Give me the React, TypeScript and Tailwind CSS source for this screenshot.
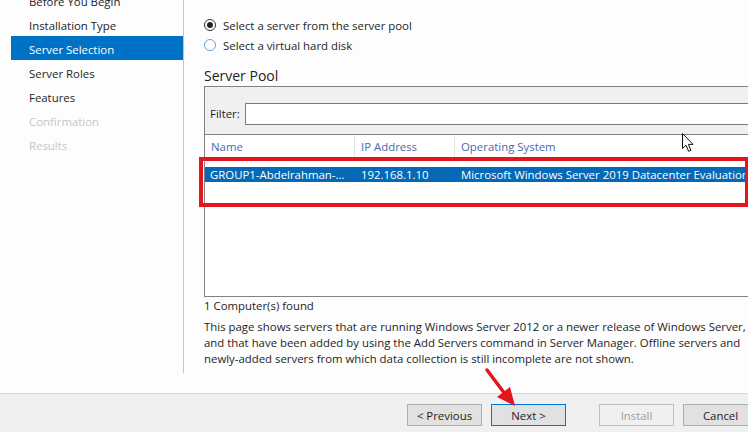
const font = { fontFamily: '"Open Sans", "Liberation Sans", sans-serif' };

const steps = [
  { label: 'Before You Begin', state: 'done' },
  { label: 'Installation Type', state: 'done' },
  { label: 'Server Selection', state: 'active' },
  { label: 'Server Roles', state: 'done' },
  { label: 'Features', state: 'done' },
  { label: 'Confirmation', state: 'off' },
  { label: 'Results', state: 'off' },
];

function Radio({ checked, label }: { checked?: boolean; label: string }) {
  return (
    <div className="flex items-center h-5 gap-[7px]">
      <span
        className={
          'w-[12px] h-[12px] rounded-full border flex items-center justify-center bg-white ' +
          (checked ? 'border-[#333333]' : 'border-[#6e9fd8]')
        }
      >
        {checked && <span className="w-[6px] h-[6px] rounded-full bg-[#222222]" />}
      </span>
      <span className="text-[#1e1e1e] pt-px">{label}</span>
    </div>
  );
}

function Button({ children, variant }: { children: React.ReactNode; variant?: 'default' | 'off' }) {
  let cls = 'bg-[#e1e1e1] border-[#adadad] text-[#1e1e1e]';
  if (variant === 'default') cls = 'bg-[#e1e1e1] border-[#0078d7] text-[#1e1e1e]';
  if (variant === 'off') cls = 'bg-[#f0f0f0] border-[#bfbfbf] text-[#a0a0a0]';
  return (
    <div className={'w-[75px] h-[22px] border flex items-center justify-center shrink-0 pt-px ' + cls}>
      {children}
    </div>
  );
}

export default function App() {
  return (
    <div
      className="relative w-[748px] h-[432px] overflow-hidden bg-[#fdfdfd] text-[11.4px] flex flex-col"
      style={font}
    >
      <div className="flex h-[393px] shrink-0">
        {/* wizard steps */}
        <div className="w-[184px] h-[373px] border-r border-[#c4c4c4] shrink-0 overflow-hidden">
          <div className="-mt-3 pl-[11px]">
            {steps.map((s) => (
              <div
                key={s.label}
                className={
                  'h-6 pl-[18px] pt-[3px] flex items-center ' +
                  (s.state === 'active'
                    ? 'bg-[#0072c6] text-white'
                    : s.state === 'off'
                    ? 'text-[#c6c6c6]'
                    : 'text-[#1e1e1e]')
                }
              >
                {s.label}
              </div>
            ))}
          </div>
        </div>

        {/* page content */}
        <div className="pl-[20px] pt-[15px] w-[600px] shrink-0">
          <Radio checked label="Select a server from the server pool" />
          <Radio label="Select a virtual hard disk" />

          <div className="mt-[11px] text-[14px] leading-5 text-[#1e1e1e]">Server Pool</div>

          <div className="border border-[#828282] h-[211px] w-[580px] bg-white">
            <div className="bg-[#f0f0f0] h-[48px] border-b border-[#828282] flex items-center pl-[5px] pt-[6px] gap-[5px]">
              <span className="text-[#1e1e1e] pt-px">Filter:</span>
              <div className="h-[22px] flex-1 bg-white border border-[#7a7a7a]" />
            </div>
            <div className="flex h-[23px] text-[#4a68ad]">
              <div className="w-[150px] border-r border-[#e3e3e3] pl-[6px] pt-px flex items-center">Name</div>
              <div className="w-[100px] border-r border-[#e3e3e3] pl-[6px] pt-px flex items-center">IP Address</div>
              <div className="flex-1 pl-[6px] pt-px flex items-center">Operating System</div>
            </div>
            <div className="pt-[9px]">
              <div className="flex h-[15px] bg-[#0569b5] text-white items-center">
                <div className="w-[150px] pl-[5px]">GROUP1-Abdelrahman-...</div>
                <div className="w-[100px] pl-[6px]">192.168.1.10</div>
                <div className="flex-1 pl-[6px] whitespace-nowrap">
                  Microsoft Windows Server 2019 Datacenter Evaluation
                </div>
              </div>
            </div>
          </div>

          <div className="h-[16px] mt-px flex items-center text-[#1e1e1e]">1 Computer(s) found</div>
          <p className="mt-[5px] w-[546px] leading-4 text-[#1e1e1e]">
            This page shows servers that are running Windows Server 2012 or a newer release of Windows Server,
            and that have been added by using the Add Servers command in Server Manager. Offline servers and
            newly-added servers from which data collection is still incomplete are not shown.
          </p>
        </div>
      </div>

      {/* footer */}
      <div className="flex-1 bg-[#f0f0f0] border-t border-[#dadada] flex items-start pt-[10px] pl-[407px] gap-[9px]">
        <Button>&lt; Previous</Button>
        <Button variant="default">Next &gt;</Button>
        <div className="w-[15px] shrink-0" />
        <Button variant="off">Install</Button>
        <Button>Cancel</Button>
      </div>

      {/* annotation: red box around selected row */}
      <div className="absolute left-[199px] top-[157px] w-[550px] h-[50px] border-4 border-[#e3161d]" />

      {/* annotation: red arrow */}
      <svg className="absolute left-[480px] top-[364px]" width="40" height="46" viewBox="0 0 40 46">
        <line x1="7" y1="6" x2="25" y2="30" stroke="#e3161d" strokeWidth="3.5" strokeLinecap="round" />
        <polygon points="35,42 17,33 30,23" fill="#e3161d" />
      </svg>

      {/* mouse cursor */}
      <svg className="absolute left-[682px] top-[133px]" width="13" height="20" viewBox="0 0 13 20">
        <path
          d="M0.5 0.5 L0.5 15.5 L4 12.2 L6.6 18.3 L8.9 17.3 L6.4 11.4 L11 11.4 Z"
          fill="white"
          stroke="#111"
          strokeWidth="1"
          strokeLinejoin="miter"
        />
      </svg>
    </div>
  );
}
